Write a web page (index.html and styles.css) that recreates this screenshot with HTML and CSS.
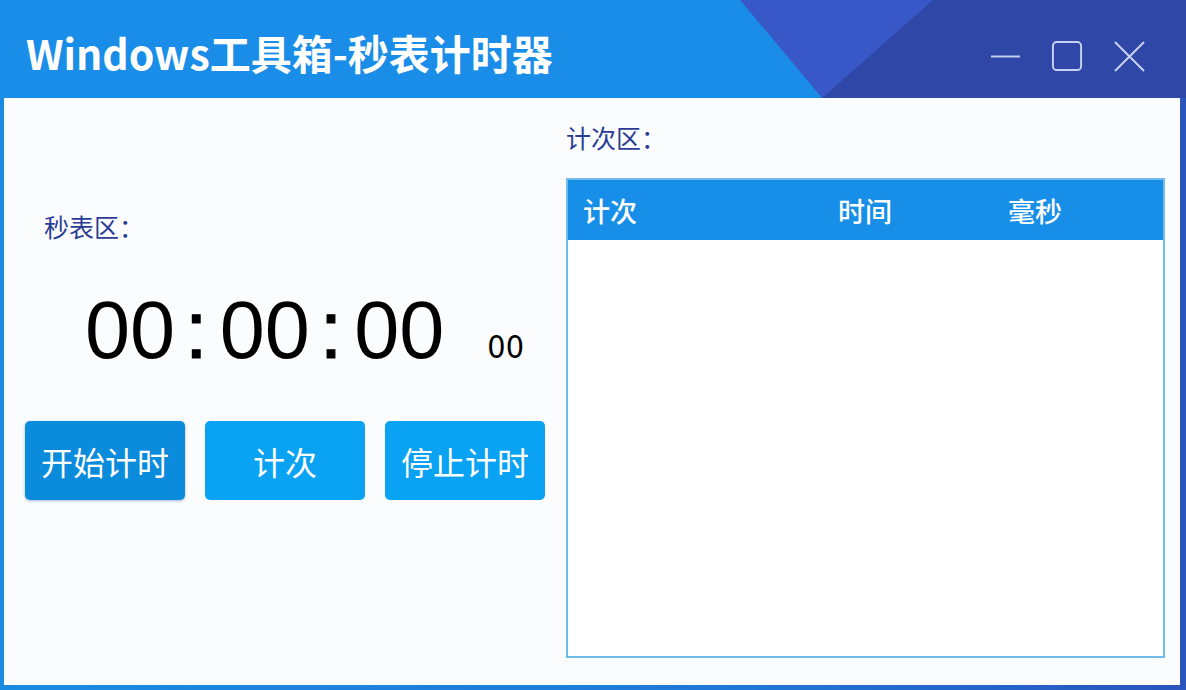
FILE: index.html
```html
<!DOCTYPE html>
<html lang="zh-CN">
<head>
<meta charset="utf-8">
<title>Windows工具箱-秒表计时器</title>
<link rel="stylesheet" href="styles.css">
</head>
<body>
<div class="window">
  <header class="titlebar">
    <svg class="title-bg" viewBox="0 0 1186 98" preserveAspectRatio="none" aria-hidden="true">
      <rect x="0" y="0" width="1186" height="98" fill="#1a8de8"/>
      <polygon points="740,0 1186,0 1186,98 822,98" fill="#3958c8"/>
      <polygon points="933,0 1186,0 1186,98 822,98" fill="#2f47a7"/>
    </svg>
    <h1 class="title">Windows工具箱-秒表计时器</h1>
    <div class="controls">
      <svg class="ctl" viewBox="0 0 34 34" aria-label="最小化"><line x1="2" y1="17" x2="32" y2="17" stroke="#c9d1f1" stroke-width="2"/></svg>
      <svg class="ctl" viewBox="0 0 34 34" aria-label="最大化"><rect x="2" y="2" width="29" height="29" rx="4" fill="none" stroke="#c9d1f1" stroke-width="2"/></svg>
      <svg class="ctl" viewBox="0 0 34 34" aria-label="关闭"><path d="M2 2 L32 32 M32 2 L2 32" stroke="#c9d1f1" stroke-width="2" fill="none"/></svg>
    </div>
  </header>
  <main class="content">
    <section class="stopwatch">
      <div class="label">秒表区：</div>
      <div class="timer">
        <span class="big">00</span><span class="colon">:</span><span class="big">00</span><span class="colon">:</span><span class="big">00</span>
        <span class="ms">00</span>
      </div>
      <div class="buttons">
        <button class="btn btn-start">开始计时</button>
        <button class="btn">计次</button>
        <button class="btn">停止计时</button>
      </div>
    </section>
    <section class="laps">
      <div class="label">计次区：</div>
      <div class="table">
        <div class="thead">
          <span class="th th-no">计次</span>
          <span class="th th-time">时间</span>
          <span class="th th-ms">毫秒</span>
        </div>
        <div class="tbody"></div>
      </div>
    </section>
  </main>
</div>
</body>
</html>
```
FILE: styles.css
```css
* { box-sizing: border-box; margin: 0; padding: 0; }
html, body { width: 1186px; height: 690px; overflow: hidden; }
body {
  font-family: "Noto Sans CJK SC", "Noto Sans", sans-serif;
  background: #ffffff;
}
.window {
  width: 1186px;
  height: 690px;
  display: flex;
  flex-direction: column;
  background: linear-gradient(to right, #1b8be2 0%, #1f78d8 60%, #2a55bd 100%);
}
.titlebar {
  position: relative;
  height: 98px;
  flex: none;
  display: flex;
  align-items: center;
  justify-content: space-between;
  padding: 4px 40px 0 26px;
}
.title-bg {
  position: absolute;
  inset: 0;
  width: 100%;
  height: 100%;
  z-index: 0;
}
.title {
  position: relative;
  z-index: 1;
  color: #ffffff;
  font-size: 41px;
  font-weight: 700;
  letter-spacing: 0;
  line-height: 1;
  margin-top: 3px;
  font-family: "Noto Sans CJK SC", "Noto Sans", sans-serif;
}
.controls {
  position: relative;
  z-index: 1;
  display: flex;
  gap: 29px;
  align-items: center;
  margin-top: 10px;
}
.ctl { width: 33px; height: 33px; display: block; }
.content {
  flex: 1;
  margin: 0 6px 5px 4px;
  background: #fbfcfe;
  display: grid;
  grid-template-columns: 562px 1fr;
}
.label {
  color: #2b3c96;
  font-size: 25px;
  line-height: 34px;
}
.stopwatch {
  padding: 111px 0 0 21px;
  display: flex;
  flex-direction: column;
}
.stopwatch .label { padding-left: 19px; }
.timer {
  display: flex;
  align-items: baseline;
  padding-left: 60px;
  margin-top: 41px;
  height: 92px;
  font-family: "Liberation Sans", Arial, sans-serif;
  color: #000000;
}
.big { font-size: 81px; line-height: 92px; }
.colon {
  font-size: 81px;
  line-height: 92px;
  margin: 0 12px 0 10px;
  -webkit-text-stroke: 1.2px #000;
}
.ms {
  font-size: 32px;
  margin-left: 43px;
  font-family: "DejaVu Sans Condensed", "DejaVu Sans", sans-serif;
  font-weight: 300;
}
.buttons {
  display: flex;
  gap: 20px;
  margin-top: 45px;
}
.btn {
  width: 160px;
  height: 79px;
  border: none;
  border-radius: 5px;
  background: #0aa2f2;
  color: #ffffff;
  font-family: "Noto Sans CJK SC", sans-serif;
  font-size: 32px;
  line-height: 1;
}
.btn-start {
  background: #0a8bdb;
  box-shadow: 0 1px 3px rgba(0, 60, 120, 0.35);
}
.laps {
  padding: 22px 15px 27px 0;
  display: flex;
  flex-direction: column;
}
.laps .label { margin-bottom: 24px; }
.table {
  flex: 1;
  border: 2px solid #70bdec;
  background: #ffffff;
  display: flex;
  flex-direction: column;
}
.thead {
  height: 60px;
  background: #178fe9;
  display: grid;
  grid-template-columns: 255px 170px 1fr;
  align-items: center;
  padding-left: 15px;
}
.th {
  color: #ffffff;
  font-size: 27px;
  line-height: 1;
  font-weight: 500;
}
.tbody { flex: 1; }
```
